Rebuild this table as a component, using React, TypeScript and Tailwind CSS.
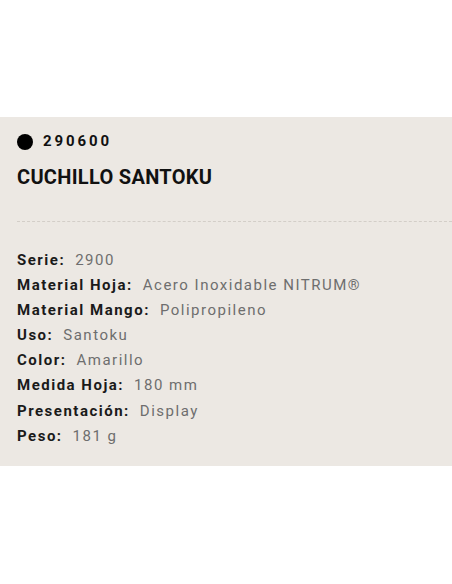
const SPECS = [
  { label: 'Serie', value: '2900' },
  { label: 'Material Hoja', value: 'Acero Inoxidable NITRUM®' },
  { label: 'Material Mango', value: 'Polipropileno' },
  { label: 'Uso', value: 'Santoku' },
  { label: 'Color', value: 'Amarillo' },
  { label: 'Medida Hoja', value: '180 mm' },
  { label: 'Presentación', value: 'Display' },
  { label: 'Peso', value: '181 g' },
];

export default function App() {
  return (
    <div className="w-[452px] h-[584px] bg-white pt-[117px] font-['Roboto',sans-serif] overflow-hidden">
      <div className="h-[349px] bg-[#ece8e3] pt-[16px]">
        {/* Reference number */}
        <div className="flex items-center gap-[10px] pl-[17px] h-[17px]">
          <span className="w-[16px] h-[16px] rounded-full bg-black" />
          <span className="text-[15px] font-bold tracking-[2.9px] text-[#111]">290600</span>
        </div>

        <h1 className="pl-[17px] mt-[15px] text-[20px] leading-[24px] font-bold tracking-[0.3px] text-[#111]">
          CUCHILLO SANTOKU
        </h1>

        <div className="ml-[17px] mt-[32px] border-t border-dashed border-[#d3cec8]" />

        {/* Specs */}
        <div className="pl-[17px] pt-[26px] flex flex-col">
          {SPECS.map(({ label, value }) => (
            <p key={label} className="text-[15px] leading-[25.1px] tracking-[1.5px]">
              <span className="font-bold text-[#1a1a1a]">{label}:</span>
              <span className="ml-[10px] text-[#6e6e6e]">{value}</span>
            </p>
          ))}
        </div>
      </div>
    </div>
  );
}
